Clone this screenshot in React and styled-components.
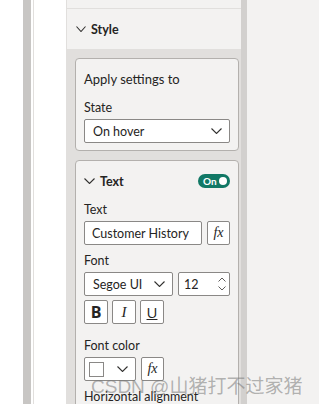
import React from 'react'
import styled, { createGlobalStyle } from 'styled-components'

const GlobalStyle = createGlobalStyle`
	html, body, #root {
		margin: 0;
		height: 100%;
		overflow: hidden;
	}
	body {
		font-family: Lato, 'Open Sans', sans-serif;
		color: #252423;
		background: #ffffff;
	}
`

const Chevron = ({ w = 10, h = 6, color = '#323130' }) => (
	<svg width={w} height={h} viewBox={`0 0 ${w} ${h}`} fill="none">
		<polyline
			points={`0.5,0.5 ${w / 2},${h - 0.5} ${w - 0.5},0.5`}
			stroke={color}
			strokeWidth="1.1"
		/>
	</svg>
)

const Spinner = () => (
	<svg width="8" height="14" viewBox="0 0 8 14" fill="none">
		<polyline points="0.5,4.5 4,1 7.5,4.5" stroke="#605e5c" strokeWidth="1" />
		<polyline points="0.5,9.5 4,13 7.5,9.5" stroke="#605e5c" strokeWidth="1" />
	</svg>
)

const App = () => {
	return (
		<Page>
			<GlobalStyle />
			<LeftPane>
				<GrayBar />
				<Divider />
			</LeftPane>

			<Panel>
				<Content>
					<TopStrip />
					<SectionHeader>
						<Chevron />
						<span>Style</span>
					</SectionHeader>

					<Body>
						<Card>
							<CardTitle>Apply settings to</CardTitle>
							<Field>
								<Label>State</Label>
								<Select>
									<span>On hover</span>
									<Chevron w={11} h={6} />
								</Select>
							</Field>
						</Card>

						<Card gap={9}>
							<CardHeader>
								<HeaderLeft>
									<Chevron w={11} h={6} />
									<span>Text</span>
								</HeaderLeft>
								<Toggle>
									<span>On</span>
									<Knob />
								</Toggle>
							</CardHeader>

							<Field>
								<Label>Text</Label>
								<Row>
									<TextBox>Customer History</TextBox>
									<FxButton>fx</FxButton>
								</Row>
							</Field>

							<Field>
								<Label>Font</Label>
								<Row>
									<Select>
										<span>Segoe UI</span>
										<Chevron w={11} h={6} />
									</Select>
									<SizeBox>
										<span>12</span>
										<Spinner />
									</SizeBox>
								</Row>
								<StyleRow>
									<StyleButton kind="bold">B</StyleButton>
									<StyleButton kind="italic">I</StyleButton>
									<StyleButton kind="underline">U</StyleButton>
								</StyleRow>
							</Field>

							<Field top={14}>
								<Label>Font color</Label>
								<Row>
									<ColorPicker>
										<Swatch />
										<Chevron w={11} h={6} />
									</ColorPicker>
									<FxButton>fx</FxButton>
								</Row>
							</Field>

							<Field>
								<Label>Horizontal alignment</Label>
							</Field>
						</Card>
					</Body>
				</Content>
				<Scrollbar />
			</Panel>

			<RightPane />

			<Watermark>CSDN @山猪打不过家猪</Watermark>
		</Page>
	)
}

export default App

const Page = styled.div`
	position: relative;
	display: flex;
	height: 100%;
	width: 100%;
`

const LeftPane = styled.div`
	width: 66px;
	flex-shrink: 0;
	display: flex;
	padding-left: 23px;
	box-sizing: border-box;
	background: #ffffff;
`

const GrayBar = styled.div`
	width: 8px;
	background: #c8c6c4;
`

const Divider = styled.div`
	width: 1px;
	margin-left: 2px;
	background: #e1dfdd;
`

const Panel = styled.div`
	width: 181px;
	flex-shrink: 0;
	display: flex;
	border-left: 1px solid #e1dfdd;
	box-sizing: border-box;
`

const Content = styled.div`
	flex: 1;
	min-width: 0;
	display: flex;
	flex-direction: column;
	background: #f3f2f1;
	overflow: hidden;
`

const TopStrip = styled.div`
	flex-shrink: 0;
	height: 8px;
	border-bottom: 1px solid #e1dfdd;
`

const SectionHeader = styled.div`
	flex-shrink: 0;
	height: 40px;
	display: flex;
	align-items: center;
	gap: 5px;
	padding-left: 9px;
	font-size: 12.5px;
	font-weight: 700;
`

const Body = styled.div`
	flex: 1 0 auto;
	background: #e1dfdd;
	padding: 9px 2px 0 8px;
`

const Card = styled.div`
	margin-top: ${(props) => props.gap || 0}px;
	background: #f3f2f1;
	border: 1px solid #b3b0ad;
	border-radius: 4px;
	padding: 7px 8px;
`

const CardTitle = styled.div`
	height: 26px;
	display: flex;
	align-items: center;
	font-size: 13px;
`

const CardHeader = styled.div`
	height: 26px;
	display: flex;
	align-items: center;
	justify-content: space-between;
`

const HeaderLeft = styled.div`
	display: flex;
	align-items: center;
	gap: 5px;
	font-size: 12.5px;
	font-weight: 700;
`

const Toggle = styled.div`
	width: 32px;
	height: 14px;
	border-radius: 7px;
	background: #117865;
	display: flex;
	align-items: center;
	justify-content: space-between;
	padding: 0 3px 0 5px;
	box-sizing: border-box;
	color: #ffffff;
	font-size: 10px;
	font-weight: 700;
`

const Knob = styled.div`
	width: 8px;
	height: 8px;
	border-radius: 50%;
	background: #ffffff;
`

const Field = styled.div`
	margin-top: ${(props) => props.top || 8}px;
`

const Label = styled.div`
	font-size: 12.5px;
	line-height: 16px;
	margin-bottom: 3px;
`

const Row = styled.div`
	display: flex;
	gap: 5px;
`

const Control = styled.div`
	height: 24px;
	box-sizing: border-box;
	background: #ffffff;
	border: 1px solid #8a8886;
	border-radius: 2px;
	display: flex;
	align-items: center;
	font-size: 12.5px;
`

const Select = styled(Control)`
	flex: 1;
	justify-content: space-between;
	padding: 0 7px 0 8px;
`

const TextBox = styled(Control)`
	flex: 1;
	padding: 0 7px;
`

const SizeBox = styled(Control)`
	width: 52px;
	justify-content: space-between;
	padding: 0 3px 0 5px;
`

const FxButton = styled(Control)`
	width: 23px;
	justify-content: center;
	font-family: 'Liberation Serif', serif;
	font-style: italic;
	font-size: 14px;
`

const StyleRow = styled.div`
	display: flex;
	gap: 4px;
	margin-top: 4px;
`

const StyleButton = styled(Control)`
	width: 24px;
	justify-content: center;
	font-size: ${(props) => (props.kind === 'bold' ? '16px' : '15px')};
	font-weight: ${(props) => (props.kind === 'bold' ? 700 : 400)};
	font-style: ${(props) => (props.kind === 'italic' ? 'italic' : 'normal')};
	font-family: ${(props) =>
		props.kind === 'italic' ? "'Liberation Serif', serif" : "'Open Sans', sans-serif"};
	text-decoration: ${(props) => (props.kind === 'underline' ? 'underline' : 'none')};
`

const ColorPicker = styled(Control)`
	width: 52px;
	justify-content: space-between;
	padding: 0 7px 0 4px;
`

const Swatch = styled.div`
	width: 15px;
	height: 15px;
	box-sizing: border-box;
	border: 1px solid #8a8886;
	background: #ffffff;
`

const Scrollbar = styled.div`
	width: 6px;
	background: #d2d0ce;
`

const RightPane = styled.div`
	flex: 1;
	background: #f3f2f1;
`

const Watermark = styled.div`
	position: absolute;
	left: 91px;
	top: 371px;
	font-family: 'Liberation Sans', 'Noto Sans CJK SC', sans-serif;
	font-size: 19px;
	color: rgba(120, 120, 120, 0.55);
	white-space: nowrap;
	pointer-events: none;
`
